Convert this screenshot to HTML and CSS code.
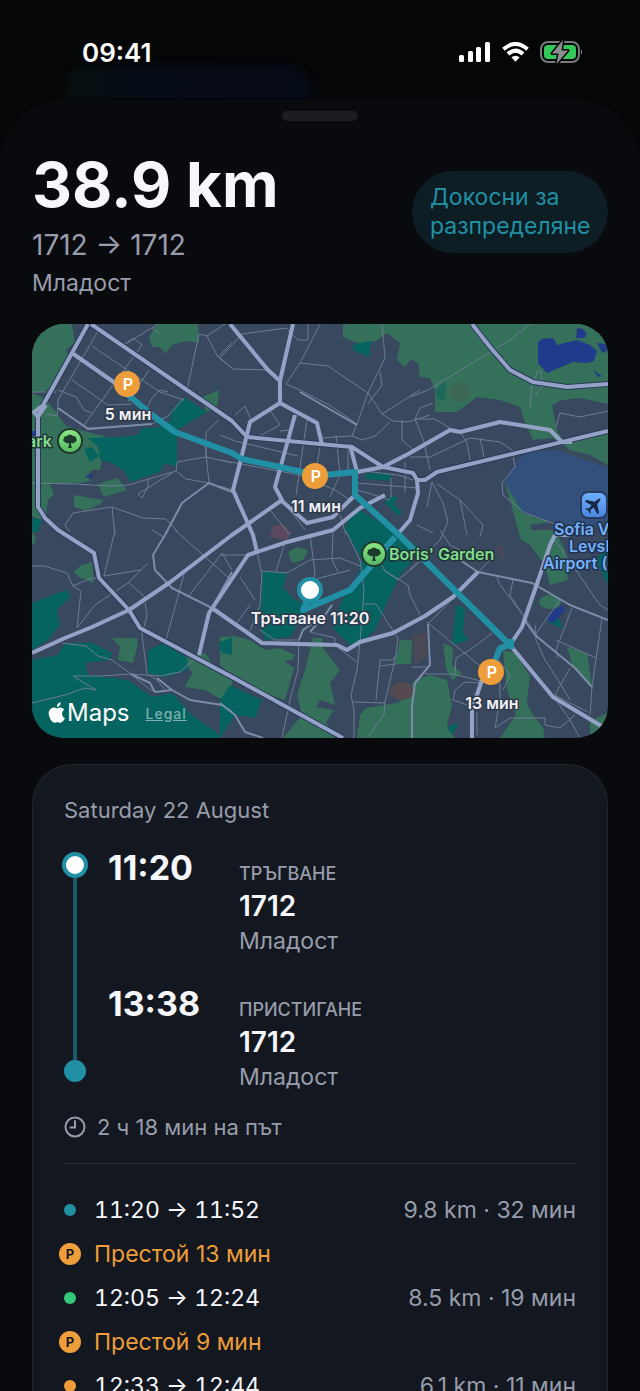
FILE: index.html
```html
<!DOCTYPE html>
<html lang="bg">
<head>
    <meta charset="UTF-8">
    <meta name="viewport" content="width=device-width, initial-scale=1.0">
    <title>38.9 km</title>
    <link rel="stylesheet" href="styles.css">
</head>
<body>
    <!-- Status bar -->
    <div class="status-bar">
        <div class="backdrop-card"></div>
        <span class="clock">09:41</span>
        <div class="status-icons">
            <svg width="32" height="20" viewBox="0 0 32 20" fill="#fff">
                <rect x="0" y="13" width="5" height="7" rx="1.5"/>
                <rect x="9" y="9" width="5" height="11" rx="1.5"/>
                <rect x="17" y="5" width="5" height="15" rx="1.5"/>
                <rect x="26" y="0" width="5" height="20" rx="1.5"/>
            </svg>
            <svg width="27" height="20" viewBox="0 0 27 20" fill="none" stroke="#fff" stroke-width="4">
                <path d="M1.5 7.2 Q13.5 -3.2 25.5 7.2"/>
                <path d="M6 12 Q13.5 5.3 21 12"/>
                <path d="M9.3 15.300 Q13.5 12 17.7 15.300 L13.5 19.7 Z" fill="#fff" stroke="none"/>
            </svg>
            <svg width="44" height="24" viewBox="0 0 44 24">
                <rect x="1" y="2" width="38" height="20" rx="7" fill="none" stroke="#77797c" stroke-width="2"/>
                <rect x="4" y="5" width="32" height="14" rx="4" fill="#35c75a"/>
                <path d="M41 9 Q43.5 12 41 15 Z" fill="#77797c"/>
                <path d="M23 0 L12 13.5 H18.5 L16.5 24 L28 10.5 H21.5 Z" fill="#8b8d90" stroke="#050608" stroke-width="3" stroke-linejoin="round" paint-order="stroke"/>
            </svg>
        </div>
    </div>

    <main class="sheet">
        <div class="grabber"></div>

        <!-- Trip summary -->
        <header class="summary">
            <div>
                <h1>38.9 km</h1>
                <p class="route">1712 → 1712</p>
                <p class="district">Младост</p>
            </div>
            <button class="assign" type="button">Докосни за разпределяне</button>
        </header>

        <!-- Map -->
        <section class="map">
            <svg class="map-canvas" viewBox="32 324 576 414">
                <rect x="32" y="324" width="576" height="414" fill="#38485e"/>

                <!-- Parks -->
                <g fill="#34705a">
                    <path d="M32 324H72L75 342 66 350 70 362 60 372 52 388 42 392H32Z"/>
                    <path d="M32 393L44 398 56 412 66 426 88 432 110 438 104 450 100 470 92 470 86 477 92 481 78 483 50 484 54 494 48 500 46 515 40 520 32 516Z"/>
                    <path d="M157 324H198L199 343 187 341 172 345 166 353 159 347 152 347 149 337Z"/>
                    <path d="M200 398L219 390 217 407 207 412Z"/>
                    <path d="M74 495L103 500 100 504 86 511 74 507Z"/>
                    <path d="M98 484L118 478 127 490 104 497Z"/>
                    <path d="M343 324H608V465L590 455 570 450 553 438 533 440 525 422 520 407 500 400 477 397 457 412 435 412V390L430 378 420 377 418 363 411 359 405 367 397 360 400 343 387 333 376 341 360 344 343 337Z"/>
                    <path d="M505 483L511 487 520 505 535 518 550 522 530 525 536 548 521 540Z"/>
                    <path d="M517 530H555L565 550 568 580 550 585 545 565 530 545Z"/>
                    <path d="M288 552L297 547 308 550 303 560 292 563Z"/>
                    <path d="M220 637L235 636 250 640 265 650 280 648 295 655 292 660 284 661 294 668 292 675 285 700 270 695 240 685 220 665Z"/>
                    <path d="M313 638H322L323 648 340 670 330 683 335 705 320 700 316 707 334 710 326 722 335 738H283L302 715 297 695 305 670Z"/>
                    <path d="M400 640H412L411 664H395Z"/>
                    <path d="M360 715L366 708 385 705 400 702 415 680 430 675 447 680 452 705 447 725 455 738H357Z"/>
                    <path d="M443 643L453 648 452 665 462 673 452 680 446 668Z"/>
                    <path d="M503 650L515 653 530 676 527 703 533 715 543 727 545 738H500L516 715 507 690Z"/>
                    <path d="M567 647L587 653 592 687 573 667Z"/>
                    <ellipse cx="550" cy="602" rx="11" ry="7"/>
                    <path d="M590 722L608 712V738H590Z"/>
                    <path d="M112 638H137L138 643 133 663 118 660 120 647Z"/>
                    <path d="M183 657L205 653 212 663 232 677V693L222 700 205 690 185 687 192 673Z"/>
                    <path d="M74 572L80 566 92 562 94 583 79 577Z"/>
                    <path d="M32 532L36 538 34 544H32Z"/>
                </g>
                <g fill="#056460">
                    <path d="M184 397L172 410 170 422 155 428 142 428 138 435 120 437 88 438 98 447 100 460 112 463 125 472 130 482 160 472 165 463 177 467V430L207 412Z"/>
                    <path d="M84 449L92 447 99 456 90 462Z"/>
                    <path d="M354 344L371 341 369 357 353 350Z"/>
                    <path d="M366 473L390 474 391 481 365 479Z"/>
                    <path d="M384 502L393 495 397 498 394 504 402 512 398 516Z"/>
                    <path d="M436 390L446 380 445 402 436 397Z" opacity=".5"/>
                    <path d="M263 571L287 573 283 588 295 600 310 605 300 620 290 637 265 640 260 625Z"/>
                    <path d="M348 520L360 510 400 535 415 545 413 560 400 575 388 600 375 630 355 648 345 640 333 628 342 600 358 575 362 560 345 530Z"/>
                    <path d="M220 700L230 685 262 700 255 718 235 715 220 738Z"/>
                    <path d="M456 605L465 608 463 633 469 640 452 645Z"/>
                    <path d="M32 603L55 594 68 590 70 597 57 610 60 625 48 640 32 650Z"/>
                    <path d="M32 660L58 655 65 643 92 643 112 653 110 660 85 663 88 675 128 680 152 697 172 693 192 715 220 735V738H32Z"/>
                    <path d="M148 650L165 643 187 658 188 670 165 677 148 673Z"/>
                    <path d="M218 643L232 637V655L222 653Z"/>
                    <path d="M548 618L558 616 563 629 550 623Z"/>
                    <path d="M32 518L42 520 38 532H32Z"/>
                    <path d="M596 560L608 545V585Z"/>
                    <path d="M447 727L459 723 452 735Z"/>
                </g>
                <path d="M552 405L562 400 580 398 608 404V430L562 440 557 430Z" fill="#38485e"/>
                <path d="M560 455L565 450 587 458 584 466 563 461Z" fill="#3a4d59"/>

                <!-- Water and airport -->
                <path d="M510 470L525 453 557 450 608 468V520L585 528 555 522 523 513 505 483Z" fill="#33507c"/>
                <g fill="#213b8c">
                    <path d="M538 343L541 339 553 338 557 345 577 340 590 345 597 351 594 361 588 363 573 362 547 373 538 363Z"/>
                    <path d="M577 328L583 329 587 334 584 338 576 338Z"/>
                    <path d="M597 343L605 344 608 350 602 353Z"/>
                    <path d="M593 370L602 376 598 377Z"/>
                    <path d="M84 477L94 474 92 478Z"/>
                    <path d="M548 618L553 611 563 605 565 610 555 622 549 622Z"/>
                    <path d="M32 431L36 431 35 436H32Z"/>
                </g>
                <g fill="#564b5c">
                    <path d="M273 526L282 524 291 532 287 541 270 537Z" fill="#5c4960"/>
                    <ellipse cx="402" cy="691" rx="12" ry="9" fill="#544a50"/>
                    <path d="M413 635L426 632 428 655 415 665Z" fill="#4b4955"/>
                    <path d="M495 548L504 543 503 560Z" opacity=".6"/>
                    <ellipse cx="460" cy="392" rx="10" ry="10" fill="#465c50" opacity=".5"/>
                </g>

                <!-- Streets -->
                <g class="street">
                    <path d="M98 331L58 400V408L88 428 152 424 168 416 184 398"/>
                    <path d="M92 346L160 392 184 400M124 345L158 324M124 345L133 338 142 345 84 425M149 370L128 402M72 380L108 405 132 404M58 390L76 397 84 410 92 413"/>
                    <path d="M145 412L152 398 160 390 168 392"/>
                    <path d="M32 392L56 392M46 414L57 416 58 408M32 483L75 484 110 486 128 485 176 471 177 462 206 457 232 463M148 479V487L142 498 138 494 172 473M176 471L186 479 209 483M206 432V457M206 432L219 420M205 444L209 483"/>
                    <path d="M187 390L199 334 207 336 218 357 232 368M207 336L225 324M218 357L232 343M152 328L160 334"/>
                    <path d="M65 525L73 513 112 507 143 518 166 519 178 532M112 507L115 535M65 525L70 532"/>
                    <path d="M220 358L242 334 286 328 298 340H308V324M220 358L233 369 270 370 280 381"/>
                    <path d="M320 324L300 363 286 384 300 390 331 406 357 424 352 436 320 438M300 363L328 366 368 393 382 414 393 421 408 422 430 415"/>
                    <path d="M382 324L385 358 368 393 357 424M380 372L382 385 368 404M352 436L362 440 375 436 390 422M382 414L420 390"/>
                    <path d="M270 410L280 425 256 438M235 415L245 406 252 422M280 431L290 430M307 420L296 495M320 448L315 475M336 435L340 475 330 497"/>
                    <path d="M220 435L235 441 298 456M220 460L300 475 335 490 350 500M355 470L398 475 413 480M357 483L418 488M358 490L390 500M348 449V470M391 478V498"/>
                    <path d="M402 420V440L416 452M405 462V493M232 490L220 486M270 510L290 535M290 510L305 530M340 515L346 535"/>
                    <path d="M410 397L428 390 510 340 530 324M415 419H435L453 430M415 419L424 442 430 470M410 457L430 457 470 438 500 442 512 450 515 467 502 483 503 495 525 513 555 524M461 433L467 443 470 460M480 438L484 457M415 419L420 408 433 403"/>
                    <path d="M538 370L532 385 530 408M540 370L543 385 535 396M556 427L560 413 580 417 608 411M432 482L427 507M432 482L443 503 448 522 440 540M437 484L460 500 483 525 480 537M460 500L467 535M417 525L433 533"/>
                    <path d="M32 566H44L67 573 73 586 81 591 77 628M73 586L92 578 100 579M77 628L95 605 128 583 148 563M115 530L104 576 140 570M129 583L146 598M232 570L222 553 188 597M175 530L232 581M184 574L166 640M152 530L165 538"/>
                    <path d="M62 643L86 646 98 656 112 660 131 674 148 688 155 692 172 690M32 703L65 695 85 688 96 690 73 676 100 676 131 674 160 676 180 672 199 655M145 603L147 615 142 635 147 674 157 680 165 690"/>
                    <path d="M257 552L262 575 260 605 250 631M220 555L248 555M262 571L287 573 310 560 340 558 360 566M285 542L276 571M310 535L315 572 312 585M333 530L332 560 338 572M312 580L350 570M240 577L255 600M235 625L250 605"/>
                    <path d="M260 630L275 640 298 640M346 531L360 560 364 590 360 642 357 670 351 695 354 710V738M299 640L298 670 290 700 282 738M310 632L335 638 335 645 358 663M364 604H376L386 620 398 638 396 655 393 660H380L376 700M380 666L396 664"/>
                    <path d="M354 702L385 703M385 702L384 715 367 738M396 655L385 702"/>
                    <path d="M371 545L385 571 408 585 410 595 420 615M385 571L398 580 420 562M410 569L440 540M427 622L497 680"/>
                    <path d="M425 674L453 674 485 682M440 530L450 545 480 560M428 624L490 560"/>
                    <path d="M455 690L453 700 467 705M455 690L465 682 480 683M455 674L456 658 470 650 492 633M498 660L510 675 503 690M412 667L428 667M500 683V700L495 728 510 718H545V725L560 728 575 715M477 712V735"/>
                    <path d="M496 575L500 585 523 615 540 640M513 580L510 595 523 615M535 625L536 640 545 660 558 680 570 700M560 600L535 635M572 608L556 650 558 658M556 640L596 658M570 668L555 695 570 703 588 712"/>
                    <path d="M555 540L600 605 608 610M554 697L570 720 580 738M602 618L592 687 590 715"/>
                </g>

                <g class="street wide">
                    <path d="M300 392L357 425M165 535L182 503 209 483 232 492M168 530L153 555 155 570 172 588 212 608M58 408L88 429 152 424M460 560L478 572 532 583 570 605 608 620M523 618L535 635 575 668 592 687"/>
                    <path d="M310 632L325 615 332 605M299 640L303 630 325 615M428 624L430 665 415 683 412 705V738M155 692L172 690 190 700 222 705 232 712M220 703L235 715 245 732 263 738"/>
                    <path d="M131 674L150 683 155 692M157 678L172 690M232 572L209 613"/>
                </g>

                <!-- Main roads -->
                <g class="road-edge">
                    <path d="M88 324L72 353 42 407 38 417V507L45 518 58 530 94 553 99 578 129 610 140 628 232 677 343 738"/>
                    <path d="M91 324L232 421 247 437 352 447 383 467 413 473 417 480H425L437 472 608 431"/>
                    <path d="M472 324L490 347 510 370 533 382 567 387 608 384"/>
                </g>
                <g class="road">
                    <path d="M88 324L72 353 42 407 38 417V507L45 518 58 530 94 553 99 578 129 610 140 628 232 677 343 738"/>
                    <path d="M91 324L232 421 247 437 352 447 383 467 413 473 417 480H425L437 472 608 431"/>
                    <path d="M72 353L118 385M38 417L46 405M38 417L34 412 42 406"/>
                    <path d="M230 324L268 370 280 381V403L250 422 240 463 233 490 253 535 257 552M293 324L280 381"/>
                    <path d="M280 403L317 423 322 445M295 415L275 487 283 502 307 523 333 517 355 495M350 445L357 472 383 467 410 453 450 430 460 432 500 422 550 430 562 442 572 442"/>
                    <path d="M472 324L490 347 510 370 533 382 567 387 608 384"/>
                    <path d="M32 653L65 638 92 627 129 610 169 583 232 535 282 500M199 655L209 613 248 555 287 542 333 530 360 508 385 495M417 480L418 493 410 520 397 535"/>
                    <path d="M212 608L262 643 337 645 347 650 360 642 393 633 425 616 453 597 478 572"/>
                    <path d="M570 535H555L550 545 540 575 522 627 510 645 553 697 603 727M472 738V710L482 680"/>
                </g>

                <!-- Trip line -->
                <path class="trip" d="M127 394L152 415 175 432 232 453 242 459 303 472 315 476 355 472V495L397 533 510 645 500 648 493 666M395 537L387 546 370 567 350 590 303 610 310 594"/>
                <path d="M505 639H514V649H505Z" fill="#2190a5"/>

                <!-- Places -->
                <g class="place">
                    <text x="27" y="447">ark</text>
                    <text x="389" y="560">Boris' Garden</text>
                </g>
                <g class="place airport">
                    <text x="554" y="535">Sofia Vasil</text>
                    <text x="569" y="552">Levski</text>
                    <text x="543" y="569">Airport (SOF)</text>
                </g>
                <defs>
                    <linearGradient id="leaf" x1="0" y1="0" x2="0" y2="1">
                        <stop offset="0" stop-color="#8ee882"/>
                        <stop offset="1" stop-color="#55b765"/>
                    </linearGradient>
                    <linearGradient id="sky" x1="0" y1="0" x2="0" y2="1">
                        <stop offset="0" stop-color="#6fb0ff"/>
                        <stop offset="1" stop-color="#4a85df"/>
                    </linearGradient>
                    <g id="tree">
                        <circle r="12" fill="url(#leaf)" stroke="#22382f" stroke-width="2"/>
                        <path d="M-2 7Q-1 5-1 2Q-4 3-5 1Q-8 0-6-3Q-6-5-3-5Q0-8 3-5Q6-5 6-3Q8 0 5 1Q4 3 1 2Q1 5 2 7Z" fill="#1c3b2b"/>
                    </g>
                </defs>
                <use href="#tree" x="70" y="441"/>
                <use href="#tree" x="374" y="554"/>
                <rect x="581" y="492" width="26" height="26" rx="7" fill="url(#sky)" stroke="#263c60" stroke-width="2"/>
                <path transform="translate(594 505) rotate(45)" d="M0-9Q1.5-8 1.5-3L9 2V4L1.5 2 1 6 3.5 8V9L0 8-3.5 9V8L-1 6-1.5 2-9 4V2L-1.5-3Q-1.5-8 0-9Z" fill="#172842"/>

                <!-- Stops -->
                <g class="stop">
                    <circle cx="127" cy="384" r="13"/>
                    <circle cx="315" cy="476" r="13"/>
                    <circle cx="491" cy="672" r="13"/>
                    <text x="128" y="390">P</text>
                    <text x="316" y="482">P</text>
                    <text x="492" y="678">P</text>
                </g>
                <circle cx="310" cy="590" r="11" fill="#fff" stroke="#2190a5" stroke-width="4"/>
                <g class="stop-label">
                    <text x="128" y="420">5 мин</text>
                    <text x="316" y="512">11 мин</text>
                    <text x="310" y="624">Тръгване 11:20</text>
                    <text x="492" y="709">13 мин</text>
                </g>
            </svg>
            <div class="attribution">
                <svg width="18" height="22" viewBox="0 0 18 22" fill="#fff">
                    <path d="M12.5 0Q13 4 9 5Q8.5 1.5 12.5 0Z"/>
                    <path d="M9 6.5Q13 4.300 16.300 7.5Q13.800 9 14 12Q14.200 15 17 16Q14 22.5 9.5 20Q5.5 22.5 2.5 17.5Q-1 11 2 7.5Q5 4.300 9 6.5Z"/>
                </svg>
                <span class="maps">Maps</span>
                <a class="legal" href="#legal">Legal</a>
            </div>
        </section>

        <!-- Trip details -->
        <section class="card">
            <p class="date">Saturday 22 August</p>
            <div class="timeline">
                <div class="rail">
                    <span class="rail-start"></span>
                    <span class="rail-line"></span>
                    <span class="rail-end"></span>
                </div>
                <div class="points">
                    <div class="point">
                        <time>11:20</time>
                        <div>
                            <p class="point-label">ТРЪГВАНЕ</p>
                            <p class="point-name">1712</p>
                            <p class="point-place">Младост</p>
                        </div>
                    </div>
                    <div class="point">
                        <time>13:38</time>
                        <div>
                            <p class="point-label">ПРИСТИГАНЕ</p>
                            <p class="point-name">1712</p>
                            <p class="point-place">Младост</p>
                        </div>
                    </div>
                </div>
            </div>
            <p class="duration">
                <svg width="22" height="22" viewBox="0 0 22 22" fill="none" stroke="#989cab" stroke-width="2" stroke-linecap="round">
                    <circle cx="11" cy="11" r="9.5"/>
                    <path d="M11 5V11.5H6.5"/>
                </svg>
                2 ч 18 мин на път
            </p>
            <ol class="legs">
                <li class="leg"><span class="marker"><i class="dot teal"></i></span><span>11:20 → 11:52</span><span class="amount">9.8 km · 32 мин</span></li>
                <li class="stay"><span class="marker"><i class="parking">P</i></span><span>Престой 13 мин</span></li>
                <li class="leg"><span class="marker"><i class="dot green"></i></span><span>12:05 → 12:24</span><span class="amount">8.5 km · 19 мин</span></li>
                <li class="stay"><span class="marker"><i class="parking">P</i></span><span>Престой 9 мин</span></li>
                <li class="leg"><span class="marker"><i class="dot orange"></i></span><span>12:33 → 12:44</span><span class="amount">6.1 km · 11 мин</span></li>
            </ol>
        </section>
    </main>
</body>
</html>
```

FILE: styles.css
```css
/* General Styles */
* {
    box-sizing: border-box;
}
body {
    margin: 0;
    height: 100vh;
    overflow: hidden;
    font-family: Inter, "Noto Sans", sans-serif;
    font-size: 23px;
    background-color: #050608;
    color: #f6f7fb;
}
h1, p, ol {
    margin: 0;
    padding: 0;
}

/* Status bar */
.status-bar {
    position: relative;
    display: flex;
    justify-content: space-between;
    align-items: center;
    height: 100px;
    padding: 4px 56px 0 82px;
}
.backdrop-card {
    position: absolute;
    left: 66px;
    bottom: 0;
    width: 242px;
    height: 34px;
    border-radius: 20px 20px 0 0;
    background: linear-gradient(90deg, #06110f, #060c16 30%, #060b18);
    filter: blur(3px);
}
.clock {
    font-size: 26px;
    font-weight: 600;
    color: #ffffff;
}
.status-icons {
    display: flex;
    align-items: center;
    gap: 11px;
}

/* Sheet */
.sheet {
    position: relative;
    padding: 11px 32px 0;
    border-radius: 64px 64px 0 0;
    background-color: #090a0e;
}
.grabber {
    width: 76px;
    height: 10px;
    margin: 0 auto;
    border-radius: 5px;
    background-color: #1c1d21;
}

/* Summary */
.summary {
    display: flex;
    justify-content: space-between;
    align-items: flex-start;
    padding: 28px 0 23px;
}
.summary h1 {
    font-size: 62px;
    line-height: 72px;
    font-weight: 700;
}
.route {
    margin-top: 4px;
    font-size: 28px;
    line-height: 40px;
    color: #989cab;
}
.district {
    line-height: 36px;
    color: #989cab;
}
.assign {
    width: 196px;
    margin-top: 22px;
    padding: 12px 16px 12px 18px;
    border: 0;
    border-radius: 41px;
    background-color: #0c1d24;
    color: #2190a5;
    font: inherit;
    line-height: 29px;
    text-align: left;
}

/* Map */
.map {
    position: relative;
    overflow: hidden;
    border-radius: 32px;
}
.map-canvas {
    display: block;
    width: 100%;
}
.street {
    fill: none;
    stroke: #6c7c94;
    stroke-width: 1;
    stroke-linejoin: round;
}
.wide {
    stroke: #7c8ba8;
    stroke-width: 2;
}
.road, .road-edge {
    fill: none;
    stroke: #93a2c6;
    stroke-width: 4;
    stroke-linejoin: round;
}
.road-edge {
    stroke: #2c3a58;
    stroke-width: 6;
}
.trip {
    fill: none;
    stroke: #2190a5;
    stroke-width: 6;
    stroke-linejoin: round;
}
.place, .stop-label {
    font-size: 16px;
    font-weight: 600;
    fill: #84dc8c;
    stroke: #1f3537;
    stroke-width: 3;
    stroke-linejoin: round;
    paint-order: stroke;
}
.airport {
    fill: #75b1fb;
    stroke: #20324f;
}
.stop-label {
    fill: #f0f2f7;
    stroke: #303a4b;
    text-anchor: middle;
}
.stop {
    fill: #ed9d3a;
}
.stop text {
    fill: #ffffff;
    font-size: 16px;
    font-weight: 600;
    text-anchor: middle;
}
.attribution {
    position: absolute;
    left: 16px;
    bottom: 11px;
    display: flex;
    align-items: center;
}
.maps {
    margin: 0 16px 0 1px;
    font-size: 24px;
    line-height: 28px;
    color: #ffffff;
}
.legal {
    font-size: 14px;
    font-weight: 500;
    color: #7fb0ad;
    letter-spacing: 1px;
}

/* Trip details */
.card {
    margin-top: 26px;
    padding: 31px 31px 0;
    border: 1px solid #20252e;
    border-bottom: 0;
    border-radius: 40px 40px 0 0;
    background-color: #131820;
}
.date {
    font-size: 22px;
    line-height: 28px;
    color: #989cab;
}
.timeline {
    display: flex;
    gap: 22px;
    margin-top: 28px;
}
.rail {
    display: flex;
    flex-direction: column;
    align-items: center;
    width: 22px;
    padding-bottom: 6px;
}
.rail-start {
    flex-shrink: 0;
    width: 26px;
    height: 26px;
    border: 4px solid #2190a5;
    border-radius: 50%;
    background-color: #ffffff;
}
.rail-line {
    flex: 1;
    width: 4px;
    background-color: #1b5969;
}
.rail-end {
    width: 22px;
    height: 22px;
    border-radius: 50%;
    background-color: #2190a5;
}
.points {
    display: flex;
    flex-direction: column;
    gap: 38px;
    padding-top: 2px;
}
.point {
    display: grid;
    grid-template-columns: 131px auto;
    align-items: baseline;
    height: 98px;
}
.point time {
    font-size: 34px;
    font-weight: 700;
    line-height: 28px;
}
.point-label {
    font-size: 18px;
    font-weight: 500;
    line-height: 28px;
    color: #989cab;
}
.point-name {
    font-size: 28px;
    font-weight: 600;
    line-height: 36px;
}
.point-place {
    line-height: 34px;
    color: #989cab;
}
.duration {
    display: flex;
    align-items: center;
    gap: 11px;
    margin-top: 25px;
    padding-bottom: 22px;
    border-bottom: 1px solid #2b303b;
    font-size: 22px;
    line-height: 28px;
    color: #989cab;
}

/* Legs */
.legs {
    margin-top: 24px;
    list-style: none;
}
.legs li {
    display: flex;
    align-items: center;
    gap: 18px;
    line-height: 44px;
}
.leg {
    font-variant-numeric: tabular-nums;
}
.stay {
    color: #ed9d3a;
}
.marker {
    display: flex;
    justify-content: center;
    width: 12px;
}
.dot {
    width: 12px;
    height: 12px;
    border-radius: 50%;
}
.teal {
    background-color: #2190a5;
}
.green {
    background-color: #32c878;
}
.orange {
    background-color: #ed9d3a;
}
.parking {
    flex-shrink: 0;
    width: 22px;
    height: 22px;
    border-radius: 50%;
    background-color: #ed9d3a;
    color: #131820;
    font-size: 13px;
    font-style: normal;
    font-weight: 700;
    line-height: 22px;
    text-align: center;
}
.amount {
    margin-left: auto;
    color: #989cab;
    font-variant-numeric: normal;
}
```
